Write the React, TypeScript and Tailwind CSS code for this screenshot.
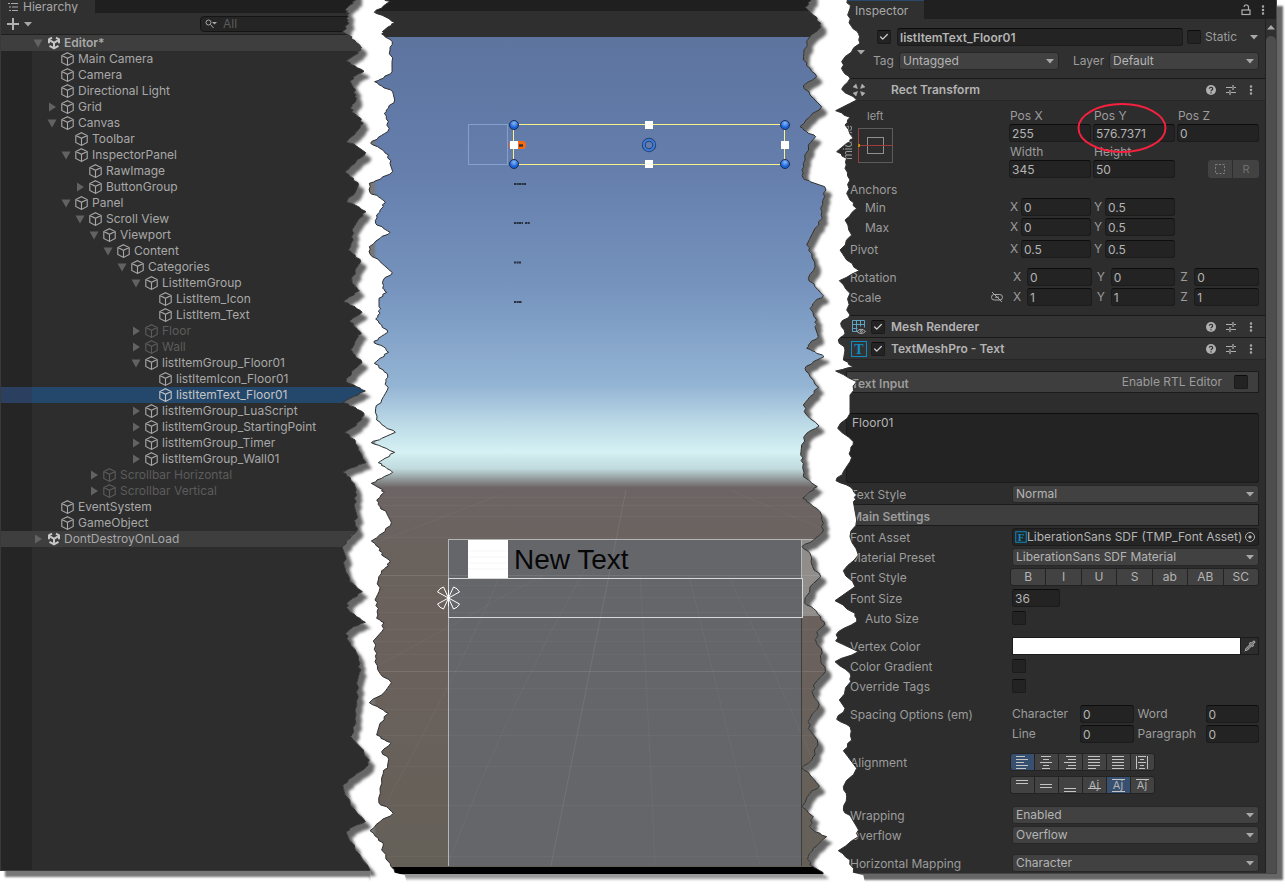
import React from 'react';
import { Check, MoreVertical, Pipette } from 'lucide-react';

type Point = [number, number];

// Torn paper edges, drawn on a 240 x 2673 grid
const hierarchyEdge: Point[] = [
  [78, 0], [60, 15], [45, 30], [57, 40], [50, 55], [57, 70], [38, 95], [55, 105], [75, 122], [92, 140], [93, 150],
  [75, 165], [48, 183], [75, 198], [102, 214], [80, 225], [60, 243], [70, 262], [78, 285], [78, 300], [65, 320],
  [66, 335], [85, 350], [100, 370], [80, 395], [50, 425], [75, 435], [107, 458], [75, 490], [44, 516], [70, 535],
  [85, 555], [78, 572], [50, 605], [75, 615], [108, 635], [88, 655], [66, 690], [70, 720], [55, 750], [75, 765],
  [92, 785], [75, 810], [66, 845], [75, 860], [88, 872], [60, 890], [40, 905], [75, 920], [96, 937], [60, 962],
  [70, 975], [92, 997], [85, 1010], [62, 1050], [75, 1065], [96, 1088], [65, 1115], [48, 1145], [80, 1160],
  [106, 1173], [70, 1190], [38, 1207], [75, 1222], [102, 1240], [95, 1260], [65, 1285], [44, 1297], [75, 1320],
  [85, 1350], [108, 1388], [60, 1405], [38, 1417], [60, 1432], [75, 1460], [80, 1485], [72, 1515], [80, 1545],
  [76, 1570], [82, 1590], [60, 1615], [36, 1640], [45, 1665], [44, 1700], [60, 1745], [97, 1775], [68, 1795],
  [50, 1810], [56, 1830], [80, 1850], [106, 1867], [70, 1880], [47, 1900], [58, 1925], [80, 1960], [90, 1990],
  [88, 2020], [80, 2050], [85, 2090], [75, 2130], [78, 2170], [62, 2210], [85, 2235], [118, 2280], [110, 2300],
  [70, 2330], [38, 2355], [45, 2385], [75, 2430], [106, 2465], [70, 2480], [48, 2495], [58, 2520], [90, 2565],
  [120, 2610],
];

const sceneLeftEdge: Point[] = [
  [165, 0], [178, 5], [160, 18], [133, 37], [165, 50], [195, 68], [175, 80], [157, 95], [160, 105], [187, 125],
  [180, 150], [186, 185], [186, 215], [160, 235], [134, 245], [155, 258], [188, 275], [194, 300], [175, 325],
  [163, 340], [175, 365], [173, 395], [145, 412], [122, 430], [150, 445], [175, 465], [180, 490], [188, 515],
  [150, 538], [118, 550], [120, 578], [145, 590], [163, 603], [160, 620], [140, 645], [137, 670], [160, 685],
  [180, 697], [150, 715], [118, 740], [120, 762], [150, 785], [187, 818], [160, 840], [158, 865], [170, 877],
  [147, 895], [147, 920], [150, 940], [137, 957], [155, 975], [173, 997], [145, 1015], [132, 1028], [160, 1040],
  [176, 1057], [150, 1075], [133, 1090], [160, 1110], [173, 1125], [168, 1145], [172, 1170], [155, 1200],
  [137, 1225], [140, 1260], [165, 1280], [196, 1297], [155, 1315], [124, 1328], [155, 1340], [194, 1357],
  [165, 1375], [145, 1388], [165, 1400], [188, 1417], [155, 1435], [124, 1450], [150, 1465], [163, 1477],
  [140, 1500], [150, 1520], [170, 1540], [184, 1567], [165, 1595], [124, 1623], [150, 1645], [155, 1665],
  [178, 1680], [175, 1698], [155, 1712], [145, 1740], [147, 1775], [135, 1800], [145, 1825], [140, 1855],
  [162, 1868], [155, 1895], [130, 1923], [140, 1960], [135, 1985], [150, 2020], [184, 2048], [165, 2075],
  [118, 2108], [150, 2125], [175, 2140], [150, 2170], [140, 2205], [165, 2220], [182, 2230], [155, 2255],
  [176, 2278], [173, 2295], [160, 2320], [150, 2365], [147, 2410], [175, 2425], [190, 2440], [150, 2465],
  [120, 2492], [145, 2515], [160, 2535], [155, 2550], [180, 2590], [195, 2618],
];

const sceneRightEdge: Point[] = [
  [65, 0], [46, 22], [70, 45], [92, 70], [90, 85], [60, 110], [42, 150], [40, 180], [60, 205], [80, 230], [40, 257],
  [60, 285], [95, 320], [60, 350], [30, 380], [50, 395], [77, 410], [55, 435], [45, 480], [36, 510], [40, 535],
  [60, 545], [104, 560], [104, 590], [92, 625], [97, 655], [75, 685], [50, 735], [65, 760], [75, 800], [55, 835],
  [75, 860], [100, 887], [75, 905], [60, 925], [80, 960], [75, 980], [85, 1010], [60, 1030], [50, 1045], [75, 1055],
  [102, 1070], [70, 1085], [45, 1105], [60, 1130], [85, 1163], [60, 1190], [40, 1215], [50, 1245], [87, 1278],
  [50, 1300], [35, 1335], [32, 1365], [40, 1390], [40, 1430], [82, 1460], [60, 1475], [38, 1495], [60, 1510],
  [90, 1535], [100, 1570], [95, 1600], [70, 1620], [36, 1640], [60, 1660], [68, 1700], [92, 1730], [60, 1760],
  [44, 1810], [70, 1825], [92, 1850], [103, 1875], [80, 1895], [80, 1930], [95, 1950], [92, 1975], [106, 2015],
  [70, 2055], [70, 2085], [88, 2115], [60, 2155], [55, 2185], [82, 2220], [75, 2265], [60, 2285], [36, 2302],
  [60, 2325], [88, 2358], [60, 2380], [36, 2420], [70, 2450], [58, 2480], [75, 2495], [110, 2510], [70, 2545],
  [55, 2570], [60, 2595], [100, 2618],
];

const inspectorEdge: Point[] = [
  [172, 0], [180, 25], [173, 45], [185, 80], [205, 100], [210, 130], [165, 170], [155, 185], [160, 215], [180, 235],
  [155, 268], [200, 300], [137, 332], [180, 352], [165, 375], [190, 415], [170, 430], [140, 455], [170, 475],
  [165, 505], [180, 540], [170, 580], [180, 600], [200, 625], [165, 660], [185, 705], [150, 750], [170, 780],
  [208, 812], [148, 842], [180, 880], [170, 930], [180, 945], [152, 970], [165, 1000], [145, 1020], [165, 1050],
  [160, 1080], [190, 1100], [137, 1113], [200, 1145], [180, 1185], [180, 1240], [143, 1285], [190, 1325],
  [182, 1350], [180, 1385], [160, 1415], [138, 1442], [180, 1460], [200, 1485], [190, 1505], [200, 1560],
  [180, 1610], [205, 1665], [160, 1712], [195, 1760], [135, 1802], [195, 1840], [200, 1865], [145, 1895],
  [137, 1923], [205, 1955], [135, 1985], [180, 2020], [182, 2045], [148, 2100], [165, 2125], [140, 2158],
  [180, 2180], [185, 2220], [160, 2252], [200, 2305], [160, 2360], [170, 2390], [160, 2430], [185, 2455],
  [200, 2480], [205, 2510], [145, 2552], [180, 2580], [190, 2618],
];

// Roughen the straight runs so that the paper looks ripped
const roughen = (edge: Point[]): Point[] =>
  edge.flatMap((p, i): Point[] => {
    const next = edge[i + 1];
    if (!next) return [p];
    const wobble = ((i * 7) % 5) - 2;
    return [
      p,
      [(2 * p[0] + next[0]) / 3 + wobble * 2, (2 * p[1] + next[1]) / 3],
      [(p[0] + 2 * next[0]) / 3 - wobble * 2, (p[1] + 2 * next[1]) / 3],
    ];
  });

const toPoints = (edge: Point[]) => edge.map(([x, y]) => `${x},${y}`).join(' ');

interface TearProps {
  id: string;
  left: Point[];
  right: Point[];
  className: string;
}

const Tear: React.FC<TearProps> = ({ id, left, right, className }) => {
  const l = roughen(left);
  const r = roughen(right);
  const lastLeft = l[l.length - 1];
  const lastRight = r[r.length - 1];
  const paper: Point[] = [
    ...l,
    [lastLeft[0] + 4, 2673],
    [lastRight[0] + 40, 2673],
    [lastRight[0] + 30, lastRight[1] + 8],
    ...[...r].reverse(),
  ];
  const shade: Point[] = [[-40, -40], [l[0][0], -40], ...l, [-40, 2610]];

  return (
    <svg
      viewBox="0 0 240 2673"
      preserveAspectRatio="none"
      className={`absolute top-0 z-20 w-20 h-[891px] pointer-events-none ${className}`}
      aria-hidden="true"
    >
      <defs>
        <clipPath id={`${id}-clip`}>
          <polygon points={toPoints(paper)} />
        </clipPath>
        <filter id={`${id}-blur`} x="-20%" y="-5%" width="140%" height="110%">
          <feGaussianBlur stdDeviation="4" />
        </filter>
      </defs>
      <polygon points={toPoints(paper)} fill="#fff" />
      <g clipPath={`url(#${id}-clip)`}>
        <polygon points={toPoints(shade)} transform="translate(18 18)" fill="#666" filter={`url(#${id}-blur)`} />
      </g>
      <polyline points={toPoints(l)} fill="none" stroke="#303030" strokeWidth="3" />
      <polyline points={toPoints(r)} fill="none" stroke="#303030" strokeWidth="3" />
    </svg>
  );
};

const CubeIcon = () => (
  <svg viewBox="0 0 14 14" className="w-3.5 h-3.5 shrink-0" fill="none" stroke="currentColor" strokeWidth="1.1">
    <path d="M6.500 .7 12.200 3.500v7L6.500 13.400.8 10.500v-7zM.8 3.500l5.700 2.800 5.700-2.800M6.500 6.300v7" />
  </svg>
);

const SceneIcon = () => (
  <svg viewBox="0 0 14 14" className="w-3.5 h-3.5 shrink-0" fill="none" stroke="#c8c8c8" strokeWidth="2">
    <path d="M5 1.600 2 3.300v4M9 1.600l3 1.700v4M2.500 9.800 7 12.400l4.500-2.600" />
    <path d="m3 4.300 4 2.500 4-2.500M7 6.800v4.500" />
  </svg>
);

const Arrow: React.FC<{ open?: boolean }> = ({ open }) => (
  <svg viewBox="0 0 12 12" className="w-3 h-3 shrink-0 text-[#626262]" fill="currentColor">
    <path d={open ? 'M1.500 2.500h9l-4.500 8z' : 'M3 1.500v9l7-4.500z'} />
  </svg>
);

const Caret: React.FC<{ className?: string }> = ({ className = '' }) => (
  <svg viewBox="0 0 10 6" className={`w-2.5 h-1.5 pointer-events-none ${className}`} fill="#a8a8a8">
    <path d="M1 1h8L5 5.500z" />
  </svg>
);

interface TreeNode {
  name: string;
  depth: number;
  open?: boolean;
  dim?: boolean;
  selected?: boolean;
}

const nodes: TreeNode[] = [
  { name: 'Editor*', depth: -1, open: true },
  { name: 'Main Camera', depth: 0 },
  { name: 'Camera', depth: 0 },
  { name: 'Directional Light', depth: 0 },
  { name: 'Grid', depth: 0, open: false },
  { name: 'Canvas', depth: 0, open: true },
  { name: 'Toolbar', depth: 1 },
  { name: 'InspectorPanel', depth: 1, open: true },
  { name: 'RawImage', depth: 2 },
  { name: 'ButtonGroup', depth: 2, open: false },
  { name: 'Panel', depth: 1, open: true },
  { name: 'Scroll View', depth: 2, open: true },
  { name: 'Viewport', depth: 3, open: true },
  { name: 'Content', depth: 4, open: true },
  { name: 'Categories', depth: 5, open: true },
  { name: 'ListItemGroup', depth: 6, open: true },
  { name: 'ListItem_Icon', depth: 7 },
  { name: 'ListItem_Text', depth: 7 },
  { name: 'Floor', depth: 6, open: false, dim: true },
  { name: 'Wall', depth: 6, open: false, dim: true },
  { name: 'listItemGroup_Floor01', depth: 6, open: true },
  { name: 'listItemIcon_Floor01', depth: 7 },
  { name: 'listItemText_Floor01', depth: 7, selected: true },
  { name: 'listItemGroup_LuaScript', depth: 6, open: false },
  { name: 'listItemGroup_StartingPoint', depth: 6, open: false },
  { name: 'listItemGroup_Timer', depth: 6, open: false },
  { name: 'listItemGroup_Wall01', depth: 6, open: false },
  { name: 'Scrollbar Horizontal', depth: 3, open: false, dim: true },
  { name: 'Scrollbar Vertical', depth: 3, open: false, dim: true },
  { name: 'EventSystem', depth: 0 },
  { name: 'GameObject', depth: 0 },
  { name: 'DontDestroyOnLoad', depth: -1, open: false },
];

const TreeRow: React.FC<{ node: TreeNode }> = ({ node }) => {
  const isScene = node.depth < 0;
  const content = node.selected ? 'bg-[#24486b]' : isScene ? 'bg-[#3e3e3e]' : 'bg-[#2d2d2d]';
  const gutter = node.selected ? 'bg-[#2b3f60]' : isScene ? 'bg-[#3e3e3e]' : 'bg-[#252525]';
  const color = node.dim ? 'text-[#5c5c5c]' : node.selected ? 'text-[#c4c4c4]' : 'text-[#a8a8a8]';

  return (
    <li className={`flex h-4 ${color}`}>
      <div className={`w-[31px] shrink-0 ${gutter}`} />
      <div
        className={`flex flex-1 items-center gap-[3px] whitespace-nowrap ${content}`}
        style={{ paddingLeft: 14 + node.depth * 14 }}
      >
        {node.open === undefined ? <span className="w-3" /> : <Arrow open={node.open} />}
        {isScene ? <SceneIcon /> : <CubeIcon />}
        <span className={node.name === 'Editor*' ? 'font-semibold' : ''}>{node.name}</span>
      </div>
    </li>
  );
};

const Hierarchy = () => (
  <aside className="relative z-10 flex flex-col w-[370px] shrink-0 mb-[3px] bg-[#2d2d2d] border-l border-b border-[#3a3a3a] shadow-[5px_6px_2px_#777]">
    <div className="flex h-[13px] bg-[#1f1f1f]">
      <div className="flex items-center gap-1 w-[94px] pl-[7px] bg-[#303030]">
        <svg viewBox="0 0 11 10" className="w-[11px] h-2.5" stroke="#a8a8a8" strokeWidth="1">
          <path d="M0 1.500h2M3 1.500h7M1 5h2M4 5h6M1 8.500h2M4 8.500h6" />
        </svg>
        <h2 className="text-xs leading-3 text-[#a8a8a8]">Hierarchy</h2>
      </div>
    </div>
    <div className="flex items-center h-[22px] pl-1.5 bg-[#303030] border-b border-[#1f1f1f]">
      <button className="flex items-center gap-1" aria-label="Create">
        <svg viewBox="0 0 12 12" className="w-3 h-3" stroke="#b0b0b0" strokeWidth="2">
          <path d="M6 0v12M0 6h12" />
        </svg>
        <Caret />
      </button>
      <label className="flex items-center gap-1.5 w-[170px] h-4 ml-auto pl-1 rounded border border-[#151515] bg-[#252525]">
        <svg viewBox="0 0 12 10" className="w-3 h-2.5 shrink-0" fill="none" stroke="#a8a8a8">
          <circle cx="3.500" cy="3.500" r="2.500" />
          <path d="m5.500 5.500 3 3.500" />
          <path d="M7 3h5L9.500 5.500z" fill="#a8a8a8" stroke="none" />
        </svg>
        <input
          className="w-24 bg-transparent outline-none text-xs placeholder:text-[#5c5c5c]"
          placeholder="All"
          aria-label="Search hierarchy"
        />
      </label>
    </div>
    <ul className="text-xs leading-4">
      {nodes.map((node) => (
        <TreeRow key={node.name} node={node} />
      ))}
    </ul>
    <div className="w-[31px] flex-1 bg-[#252525]" />
    <Tear id="tear-left" left={hierarchyEdge} right={sceneLeftEdge} className="-right-10" />
  </aside>
);

const gridRows = [497, 505, 516, 537, 575, 585, 597, 612, 629, 641, 654, 671, 688, 709, 735, 766, 805, 856];

const SceneView = () => (
  <main className="relative flex flex-col flex-1 min-w-0 bg-black shadow-[0_5px_3px_#999]">
    <div className="h-[11px] bg-[#1f1f1f]" />
    <div className="h-[26px] bg-[#2f2f2f]" />
    <div className="flex-1 mb-[7px] overflow-hidden bg-[linear-gradient(#5d749f_0%,#657eac_16%,#7593bd_30%,#94b4d4_42%,#bfdde8_47%,#d5f1f4_50%,#c0dadd_52%,#6d6565_54.300%,#6a625d_62%,#6b615c_76%,#646058_100%)]">
      <svg viewBox="370 37 460 829" className="w-[460px] h-[829px]" fill="none">
        <defs>
          <radialGradient id="knob" cx="50%" cy="30%">
            <stop offset="0%" stopColor="#8ab8f5" />
            <stop offset="100%" stopColor="#1560d8" />
          </radialGradient>
        </defs>
        <rect x="802" y="540" width="28" height="76" fill="#918d8a" />
        <rect x="449" y="540" width="353" height="327" rx="2" fill="#65666a" />
        {gridRows.map((y) => (
          <path key={y} d={`M370 ${y}.5H830`} stroke="#fff" strokeOpacity={y === 671 || y === 575 ? 0.1 : 0.035} />
        ))}
        <path d="M626 490Q592 660 551 866" stroke="#c8cfc8" strokeOpacity="0.12" />
        <path
          d="M640 575Q650 740 655 866M500 575Q470 650 385 805M590 560Q510 700 449 860M690 580Q720 700 760 866M730 580Q770 660 830 800M370 545 500 495M730 490 830 532M570 560 370 670"
          stroke="#c8cfc8"
          strokeOpacity="0.06"
        />
        <path d="M448.500 867V540M448 539.500H830M801.500 540v39" stroke="#b5b5b5" />
        <path d="M801.500 618V867" stroke="#3d3d40" />
        <rect x="448.500" y="578.500" width="354" height="39" stroke="#d8d8d8" />
        <rect x="468" y="540" width="40" height="38" fill="#fff" />
        <path d="M468 551h40M468 557h40M468 563h40M468 569h40" stroke="#f6f6f6" />
        <text x="514" y="569" fontSize="28" fontFamily="Liberation Sans, Arial, sans-serif" fill="#070708">
          New Text
        </text>
        <path
          d="m448.500 598-5-11-6 5zl5-11 6 5zl11 5-6 5zl-11 5 6 5zl11-5M448.500 598v-6"
          stroke="none"
        />
        <path
          d="m448.500 598-5-11q-4 1-6 5zl5-11q4 1 6 5zM448.500 598l11 6q-2 4-6 5zM448.500 598l-11 6q2 4 6 5zM448.500 590v16"
          stroke="#fff"
          strokeLinejoin="round"
        />

        <rect x="468.500" y="124.500" width="39" height="40" stroke="#86a0cd" />
        <rect x="509" y="141" width="17" height="8" rx="4" fill="#f96a0e" />
        <path d="M519 145.500h4" stroke="#30333c" strokeWidth="2.500" />
        <rect x="513.500" y="124.500" width="271" height="40" stroke="#f9f28a" />
        <g fill="#fff">
          <rect x="645" y="121" width="8" height="8" />
          <rect x="645" y="160" width="8" height="8" />
          <rect x="510" y="141" width="8" height="8" />
          <rect x="781" y="141" width="8" height="8" />
        </g>
        <g fill="url(#knob)" stroke="#1d2f52">
          <circle cx="514" cy="125" r="4.500" />
          <circle cx="785" cy="125" r="4.500" />
          <circle cx="514" cy="164" r="4.500" />
          <circle cx="785" cy="164" r="4.500" />
        </g>
        <circle cx="649" cy="145" r="5.200" stroke="#27406f" strokeWidth="4" />
        <circle cx="649" cy="145" r="5.200" stroke="#3b7bdd" strokeWidth="2" />
        <g stroke="#26303f" strokeWidth="2" strokeDasharray="2.500 .5 1.500 .3">
          <path d="M514 184h12M514 223h9M525 223h5M514 262.500h7M514 302h8" />
        </g>
      </svg>
    </div>
  </main>
);

const TextField: React.FC<{ value: string; className?: string; label?: string }> = ({ value, className = '', label }) => (
  <input
    defaultValue={value}
    aria-label={label}
    className={`h-[18px] min-w-0 px-0.5 rounded-[3px] border border-[#1b1b1b] border-t-[#0d0d0d] bg-[#232323] text-xs text-[#b4b4b4] outline-none ${className}`}
  />
);

const NumberField: React.FC<{ label: string; value: string; className?: string; labelClass?: string }> = ({
  label,
  value,
  className = '',
  labelClass = 'w-[11px]',
}) => (
  <label className={`flex items-center min-w-0 ${className}`}>
    <span className={`shrink-0 ${labelClass}`}>{label}</span>
    <TextField value={value} className="w-full" />
  </label>
);

const Dropdown: React.FC<{ id: string; value: string; className?: string }> = ({ id, value, className = '' }) => (
  <div className={`relative ${className}`}>
    <select
      id={id}
      defaultValue={value}
      className="block w-full h-[18px] pl-[3px] pr-5 appearance-none rounded-[3px] border border-[#272727] bg-[#414141] text-xs text-[#b4b4b4] outline-none"
    >
      <option>{value}</option>
    </select>
    <Caret className="absolute right-1 top-1.5" />
  </div>
);

const Checkbox: React.FC<{ id: string; checked?: boolean }> = ({ id, checked }) => (
  <span className="relative block w-3.5 h-3.5 shrink-0">
    <input
      id={id}
      type="checkbox"
      aria-label={id}
      defaultChecked={checked}
      className="peer block w-3.5 h-3.5 appearance-none rounded-[2px] border border-[#1b1b1b] border-t-[#0d0d0d] bg-[#232323]"
    />
    <Check className="absolute inset-0.5 w-2.5 h-2.5 hidden peer-checked:block text-[#d0d0d0] pointer-events-none" strokeWidth={3} />
  </span>
);

const Row: React.FC<{ label: string; htmlFor?: string; indent?: boolean; className?: string; children?: React.ReactNode }> = ({
  label,
  htmlFor,
  indent,
  className = '',
  children,
}) => (
  <div className={`flex items-center h-5 ${className}`}>
    <label htmlFor={htmlFor} className={`w-[162px] shrink-0 pt-0.5 ${indent ? 'pl-[15px]' : ''}`}>
      {label}
    </label>
    <div className="flex flex-1 items-center min-w-0">{children}</div>
  </div>
);

const HeaderTools = () => (
  <div className="flex items-center gap-2 ml-auto pr-2 text-[#b0b0b0]">
    <button aria-label="Help" className="flex items-center justify-center w-3 h-3">
      <svg viewBox="0 0 12 12" className="w-3 h-3">
        <circle cx="6" cy="6" r="5" fill="#b0b0b0" />
        <path d="M4.300 4.800a1.700 1.500 0 1 1 2.500 1.300c-.6.3-.8.600-.8 1.100M6 8.200v1.200" fill="none" stroke="#2d2d2d" strokeWidth="1.200" />
      </svg>
    </button>
    <button aria-label="Presets" className="w-3 h-3">
      <svg viewBox="0 0 12 12" className="w-3 h-3" stroke="#b0b0b0" strokeWidth="1.200">
        <path d="M1 3.500h6M9 3.500h2M8 1v5M1 8.500h3M6 8.500h5M5 6v5" />
      </svg>
    </button>
    <button aria-label="More" className="w-3 h-3.5">
      <MoreVertical className="w-3 h-3.5" strokeWidth={3} />
    </button>
  </div>
);

const ComponentHeader: React.FC<{ title: string; icon: React.ReactNode; checkbox?: boolean }> = ({ title, icon, checkbox }) => (
  <div className="flex items-center h-[22px] pl-[21px] bg-[#333333] border-t border-[#191919]">
    <span className="w-4 mr-1">{icon}</span>
    <span className="w-5">{checkbox && <Checkbox id={`${title} enabled`} checked />}</span>
    <h3 className="text-xs font-semibold text-[#b4b4b4]">{title}</h3>
    <HeaderTools />
  </div>
);

const Letter: React.FC<{ children: string }> = ({ children }) => (
  <text x="8" y="13" textAnchor="middle" fontSize="14" fontFamily="Liberation Serif, serif" fontWeight="bold" fill="#0c8dc4">
    {children}
  </text>
);

const alignIcons = [
  'M0 .5h9M0 3.500h12M0 6.500h8M0 9.500h12M0 12.500h10',
  'M1 .5h10M3 3.500h6M0 6.500h12M3 9.500h6M2 12.500h8',
  'M2 .5h10M4 3.500h8M0 6.500h12M4 9.500h8M2 12.500h10',
  'M0 .5h12M0 3.500h12M0 6.500h12M0 9.500h12M0 12.500h8',
  'M0 .5h12M0 3.500h12M0 6.500h12M0 9.500h12M0 12.500h12',
  'M.5 0v13M11.500 0v13M2 .5h8M4 3.500h4M2 6.500h8M4 9.500h4M3 12.500h6',
];

const verticalIcons = [
  'M0 1.500h12M0 4.500h12',
  'M0 5.500h12M0 8.500h12',
  'M0 9.500h12M0 12.500h12',
  'M0 9.500h13',
  'M0 .5h13M0 12.500h13',
  'M0 .5h13',
];

const AlignButtons: React.FC<{ icons: string[]; active: number; label: string }> = ({ icons, active, label }) => (
  <div className="flex gap-px h-[18px] -ml-0.5 rounded-[3px] overflow-hidden border border-[#232323] bg-[#232323]">
    {icons.map((d, i) => (
      <button
        key={d}
        aria-label={`${label} ${i + 1}`}
        className={`flex items-center justify-center w-[23px] ${i === active ? 'bg-[#37506f]' : 'bg-[#424242]'}`}
      >
        <svg viewBox="0 0 13 13" className="w-[13px] h-[13px]" stroke="#c4c4c4" fill="none">
          <path d={d} />
          {icons === verticalIcons && i > 2 && (
            <text x="6" y="10" textAnchor="middle" fontSize="11" fill="#b4b4b4" stroke="none">
              Aj
            </text>
          )}
        </svg>
      </button>
    ))}
  </div>
);

const vectorRows = [
  { label: 'Min', x: '0', y: '0.5', indent: true, className: '' },
  { label: 'Max', x: '0', y: '0.5', indent: true, className: '' },
  { label: 'Pivot', x: '0.5', y: '0.5', indent: false, className: 'mt-0.5' },
];

const RectTransform = () => (
  <section className="pl-5 pr-1.5 pt-2 pb-2 border-t border-[#262626]">
    <div className="flex">
      <div className="relative w-[159px] shrink-0">
        <p className="pl-[17px] text-[11px] leading-[14px]">left</p>
        <div className="flex">
          <span className="absolute top-4 -left-2 [writing-mode:vertical-rl] rotate-180 text-[11px] leading-3">middle</span>
          <svg viewBox="0 0 36 36" className="w-9 h-9 ml-2 mt-[5px]" fill="none">
            <rect x=".5" y=".5" width="34" height="34" stroke="#5c5c5c" />
            <rect x="9.500" y="9.500" width="16" height="16" stroke="#909090" />
            <path d="M.5 1v34M1 17.500h34" stroke="#a03b3b" />
            <rect x="-1" y="16" width="3" height="3" fill="#c09000" />
          </svg>
        </div>
      </div>
      <div className="grid flex-1 grid-cols-3 gap-x-0.5">
        <label>
          <span className="block h-[15px] leading-[14px] pl-px">Pos X</span>
          <TextField value="255" className="block w-full" />
        </label>
        <label className="relative">
          <span className="block h-[15px] leading-[14px] pl-px">Pos Y</span>
          <TextField value="576.7371" className="block w-full" />
          <svg viewBox="0 0 90 50" className="absolute -left-4 -top-1.5 w-[90px] h-[50px] max-w-none z-10 pointer-events-none" fill="none">
            <ellipse cx="45" cy="25" rx="43.500" ry="24" stroke="#f5213f" strokeWidth="2" />
          </svg>
        </label>
        <label>
          <span className="block h-[15px] leading-[14px] pl-px">Pos Z</span>
          <TextField value="0" className="block w-full" />
        </label>
        <label>
          <span className="block h-[18px] leading-5 pl-px">Width</span>
          <TextField value="345" className="block w-full" />
        </label>
        <label>
          <span className="block h-[18px] leading-5 pl-px">Height</span>
          <TextField value="50" className="block w-full" />
        </label>
        <div className="flex items-end justify-end">
          <div className="flex gap-px h-[18px] text-[11px] text-[#707070]">
            <button aria-label="Blueprint mode" className="flex items-center justify-center w-6 rounded-l-[3px] bg-[#424242]">
              <svg viewBox="0 0 12 12" className="w-3 h-3" fill="none" stroke="#808080">
                <rect x="1.500" y="1.500" width="9" height="9" strokeDasharray="2 1.500" />
              </svg>
            </button>
            <button className="w-[26px] rounded-r-[3px] bg-[#424242]">R</button>
          </div>
        </div>
      </div>
    </div>
    <p className="mt-1 h-[15px] leading-4">Anchors</p>
    {vectorRows.map((row) => (
      <div key={row.label} className={`flex items-center h-5 ${row.className}`}>
        <span className={`w-[160px] pt-px ${row.indent ? 'pl-[15px]' : ''}`}>{row.label}</span>
        <NumberField label="X" value={row.x} className="w-[81px] mr-[3px]" />
        <NumberField label="Y" value={row.y} className="w-[81px]" />
      </div>
    ))}
    <div className="flex items-center h-5 mt-2">
      <span className="w-[162px] shrink-0 pt-px">Rotation</span>
      <div className="flex flex-1 gap-1">
        {['X', 'Y', 'Z'].map((axis) => (
          <NumberField key={axis} label={axis} value="0" className="flex-1" labelClass="w-[15px] pl-px" />
        ))}
      </div>
    </div>
    <div className="flex items-center h-5">
      <span className="w-[141px] shrink-0 pt-px">Scale</span>
      <button aria-label="Link scale" className="w-[21px] shrink-0">
        <svg viewBox="0 0 12 10" className="w-3 h-2.5" fill="none" stroke="#a8a8a8">
          <rect x=".5" y="2.500" width="11" height="5.500" rx="2.700" />
          <path d="M4 5.200h4" />
          <path d="m1 0 10 10" />
        </svg>
      </button>
      <div className="flex flex-1 gap-1">
        {['X', 'Y', 'Z'].map((axis) => (
          <NumberField key={axis} label={axis} value="1" className="flex-1" labelClass="w-[15px] pl-px" />
        ))}
      </div>
    </div>
  </section>
);

const TextMeshPro = () => (
  <section className="pl-4 pr-1.5 pt-[11px] border-t border-[#262626]">
    <div className="flex items-center h-[22px] pr-2.5 pl-1 border border-[#1b1b1b] bg-[#3e3e3e]">
      <h4 className="pt-1 text-xs font-semibold">Text Input</h4>
      <label htmlFor="rtl" className="ml-auto mr-3">Enable RTL Editor</label>
      <Checkbox id="rtl" />
    </div>
    <textarea
      aria-label="Text"
      defaultValue="Floor01"
      className="block w-full h-[70px] mt-5 px-[5px] py-0 resize-none rounded-[3px] border border-[#1b1b1b] border-t-[#0d0d0d] bg-[#232323] text-xs leading-[18px] text-[#b4b4b4] outline-none"
    />
    <div className="pl-1">
      <Row label="Text Style" htmlFor="text-style" className="mt-px">
        <Dropdown id="text-style" value="Normal" className="flex-1" />
      </Row>
    </div>
    <div className="flex items-center h-[22px] pl-1 border border-[#1b1b1b] bg-[#3e3e3e]">
      <h4 className="pt-1 text-xs font-semibold">Main Settings</h4>
    </div>
    <div className="pl-1">
      <Row label="Font Asset" className="mt-px">
        <button className="flex items-center flex-1 min-w-0 h-[18px] pl-0.5 rounded-[3px] border border-[#1b1b1b] bg-[#252525] text-xs text-[#b4b4b4] whitespace-nowrap">
          <svg viewBox="0 0 16 16" className="w-3 h-3 shrink-0">
            <rect x="1" y="1" width="14" height="14" fill="none" stroke="#0c8dc4" strokeWidth="1.300" />
            <Letter>F</Letter>
          </svg>
          <span>LiberationSans SDF (TMP_Font Asset)</span>
          <svg viewBox="0 0 12 12" className="w-3 h-3 ml-auto mr-0.5 shrink-0" fill="none" stroke="#b4b4b4">
            <circle cx="6" cy="6" r="4.500" />
            <circle cx="6" cy="6" r="1.200" fill="#b4b4b4" />
          </svg>
        </button>
      </Row>
      <Row label="Material Preset" htmlFor="material">
        <Dropdown id="material" value="LiberationSans SDF Material" className="flex-1" />
      </Row>
      <Row label="Font Style">
        <div className="flex flex-1 gap-px h-[18px] -ml-0.5 rounded-[3px] overflow-hidden border border-[#232323] bg-[#232323] text-xs text-[#b4b4b4]">
          {['B', 'I', 'U', 'S', 'ab', 'AB', 'SC'].map((style) => (
            <button key={style} className="flex-1 bg-[#424242]">{style}</button>
          ))}
        </div>
      </Row>
      <Row label="Font Size" className="mt-px">
        <TextField value="36" label="Font Size" className="w-12" />
      </Row>
      <Row label="Auto Size" htmlFor="auto-size" indent>
        <Checkbox id="auto-size" />
      </Row>
      <Row label="Vertex Color" className="mt-2">
        <button aria-label="Vertex Color" className="flex-1 h-[18px] border border-[#1b1b1b] bg-white" />
        <button aria-label="Pick color" className="flex items-center justify-center w-[18px] h-[18px] border border-l-0 border-[#1b1b1b]">
          <Pipette className="w-3 h-3 text-[#b4b4b4]" fill="#707070" />
        </button>
      </Row>
      <Row label="Color Gradient" htmlFor="gradient">
        <Checkbox id="gradient" />
      </Row>
      <Row label="Override Tags" htmlFor="override">
        <Checkbox id="override" />
      </Row>
      <Row label="Spacing Options (em)" className="mt-2">
        <NumberField label="Character" value="0" className="flex-1" labelClass="w-[68px]" />
        <NumberField label="Word" value="0" className="flex-1 ml-1" labelClass="w-[68px]" />
      </Row>
      <Row label="">
        <NumberField label="Line" value="0" className="flex-1" labelClass="w-[68px]" />
        <NumberField label="Paragraph" value="0" className="flex-1 ml-1" labelClass="w-[68px]" />
      </Row>
      <Row label="Alignment" className="mt-2">
        <AlignButtons icons={alignIcons} active={0} label="Horizontal align" />
      </Row>
      <Row label="" className="mt-[3px]">
        <AlignButtons icons={verticalIcons} active={4} label="Vertical align" />
      </Row>
      <Row label="Wrapping" htmlFor="wrapping" className="mt-2.5">
        <Dropdown id="wrapping" value="Enabled" className="flex-1" />
      </Row>
      <Row label="Overflow" htmlFor="overflow">
        <Dropdown id="overflow" value="Overflow" className="flex-1" />
      </Row>
      <Row label="Horizontal Mapping" htmlFor="mapping" className="mt-2">
        <Dropdown id="mapping" value="Character" className="flex-1" />
      </Row>
    </div>
  </section>
);

const Inspector = () => (
  <aside className="relative z-10 w-[447px] shrink-0 bg-[#2d2d2d] border-r border-b border-[#454545] shadow-[6px_6px_2px_#666] text-xs text-[#9c9c9c]">
    <div className="flex items-center h-[19px] bg-[#202020]">
      <div className="w-[94px] h-full pl-[25px] pt-0.5 border-t border-[#2b4a6b] bg-[#303030]">
        <h2 className="text-[#a8a8a8]">Inspector</h2>
      </div>
      <button aria-label="Lock" className="ml-auto mr-1.5">
        <svg viewBox="0 0 10 12" className="w-2.5 h-3" fill="none" stroke="#b0b0b0" strokeWidth="1.200">
          <rect x="1" y="6" width="8" height="4.500" />
          <path d="M7.500 6V3.500a2.200 2.200 0 0 0-4.500-.5" />
        </svg>
      </button>
      <button aria-label="Inspector menu" className="mr-[7px]">
        <MoreVertical className="w-3 h-3.5 text-[#b0b0b0]" strokeWidth={3} />
      </button>
    </div>
    <div className="flex">
      <div className="flex-1 min-w-0">
        <div className="flex pt-[9px] pb-2 pr-1.5 bg-[#303030]">
          <div className="w-[43px] shrink-0 pt-[21px] pl-[26px]">
            <Caret />
          </div>
          <div className="flex-1">
            <div className="flex items-center pl-1">
              <Checkbox id="active" checked />
              <input
                aria-label="Object name"
                defaultValue="listItemText_Floor01"
                className="flex-1 h-[18px] ml-1.5 mr-1 px-0.5 rounded-[3px] border border-[#1b1b1b] border-t-[#0d0d0d] bg-[#232323] text-xs font-semibold text-[#b4b4b4] outline-none"
              />
              <Checkbox id="static" />
              <label htmlFor="static" className="w-12 pl-1">Static</label>
              <Caret />
            </div>
            <div className="flex items-center mt-1.5">
              <label htmlFor="tag" className="w-[26px]">Tag</label>
              <Dropdown id="tag" value="Untagged" className="w-[160px]" />
              <label htmlFor="layer" className="w-[50px] pl-3.5">Layer</label>
              <Dropdown id="layer" value="Default" className="flex-1" />
            </div>
          </div>
        </div>
        <ComponentHeader
          title="Rect Transform"
          icon={
            <svg viewBox="0 0 14 14" className="w-4 h-3.5" fill="#b0b0b0" stroke="#b0b0b0">
              <path d="M5.500 5.500 1 4l3-3zM8.500 5.500 13 4l-3-3zM5.500 8.500 1 10l3 3zM8.500 8.500 13 10l-3 3z" strokeWidth=".5" />
            </svg>
          }
        />
        <RectTransform />
        <ComponentHeader
          title="Mesh Renderer"
          checkbox
          icon={
            <svg viewBox="0 0 16 16" className="w-4 h-4" fill="none" stroke="#5fa3c4">
              <path d="M1.500 1.500h12v7M1.500 1.500v11h5M5.500 1.500v11M9.500 1.500v6M1.500 5.500h12M1.500 9.500h5" />
              <path d="M6 12.500q4-4.500 8.500 0-4.500 4-8.500 0z" stroke="#b0b0b0" />
              <circle cx="10.300" cy="12.300" r="1" stroke="#b0b0b0" />
            </svg>
          }
        />
        <ComponentHeader
          title="TextMeshPro - Text"
          checkbox
          icon={
            <svg viewBox="0 0 16 16" className="w-4 h-4">
              <rect x=".5" y=".5" width="15" height="15" fill="none" stroke="#0c8dc4" />
              <Letter>T</Letter>
            </svg>
          }
        />
        <TextMeshPro />
      </div>
      <div className="flex flex-col items-center w-[11px] border-l border-[#222] bg-[#303030]">
        <svg viewBox="0 0 8 6" className="w-2 h-1.5 mt-[5px] mb-1.5" fill="#a8a8a8">
          <path d="M0 5.500h8L4 1z" />
        </svg>
        <div className="w-full flex-1 rounded-t-md bg-[#4d4d4d]" />
      </div>
    </div>
    <Tear id="tear-right" left={sceneRightEdge} right={inspectorEdge} className="-left-10" />
  </aside>
);

export default function App() {
  return (
    <div className="min-h-screen overflow-hidden bg-white pb-[18px] font-[Inter,sans-serif]">
      <div className="flex items-stretch pr-2">
        <Hierarchy />
        <SceneView />
        <Inspector />
      </div>
    </div>
  );
}
